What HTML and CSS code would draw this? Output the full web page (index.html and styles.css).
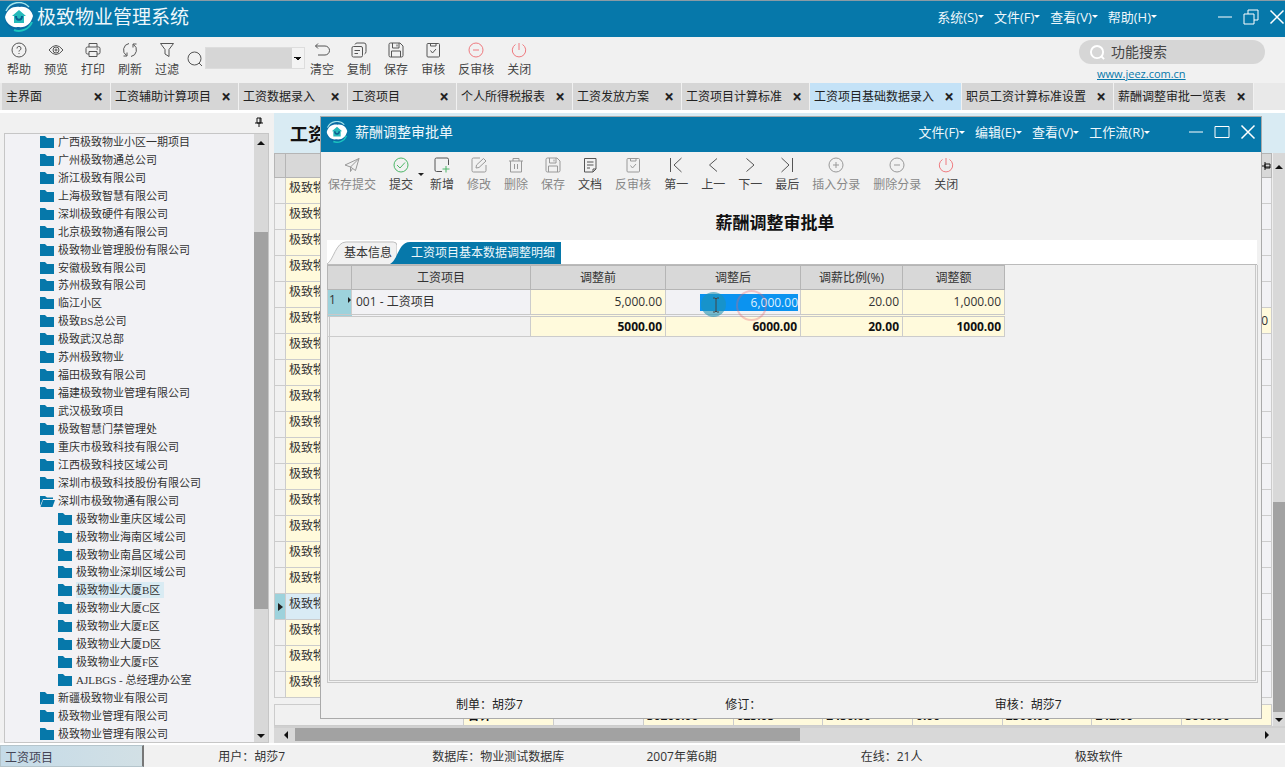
FILE: index.html
```html
<!DOCTYPE html>
<html lang="zh-CN">
<head>
<meta charset="utf-8">
<title>极致物业管理系统</title>
<link rel="stylesheet" href="styles.css">
</head>
<body>
<svg class="defs" width="0" height="0" aria-hidden="true">
  <symbol id="logo" viewBox="0 0 30 30"><circle cx="15" cy="15" r="14" fill="#0a6ba2"/><path d="M2 9A14 14 0 0 1 25 5" fill="none" stroke="#a5e3ea" stroke-width="1.500"/><path d="M28 20A14 14 0 0 1 10 28" fill="none" stroke="#1cc5c0" stroke-width="2"/><path d="M1 15C3 7 9 4 16 5C23 4 28 9 29 14C27 22 22 26 14 25C7 26 2 21 1 15Z" fill="#fff"/><path d="M15 8L22 14H20V21H10V14H8Z" fill="#25b9ba"/><path d="M12 14C12 19 18 19 18 14" fill="none" stroke="#0b5f90" stroke-width="2"/></symbol>
  <symbol id="help" viewBox="0 0 16 16"><circle cx="8" cy="8" r="7"/><path d="M6 6.500A2 2 0 1 1 8.600 8.300Q8 8.600 8 9.600M8 11V12"/></symbol>
  <symbol id="eye" viewBox="0 0 16 16"><path d="M1 8Q8 -1 15 8Q8 17 1 8Z"/><circle cx="8" cy="8" r="3"/><circle cx="8" cy="8" r="1"/></symbol>
  <symbol id="print" viewBox="0 0 16 16"><path d="M4 5V1.500H12V5M4 12H2.500Q1 12 1 10.500V6.500Q1 5 2.500 5H13.500Q15 5 15 6.500V10.500Q15 12 13.500 12H12M4 9.500H12V14.500H4ZM11.500 7H13"/></symbol>
  <symbol id="refresh" viewBox="0 0 16 16"><path d="M7 1.500A6.600 6.600 0 0 0 4.500 13.500M1.500 14H5V10.500M9 14.500A6.600 6.600 0 0 0 11.500 2.500M14.500 2H11V5.500"/></symbol>
  <symbol id="filter" viewBox="0 0 16 16"><path d="M1.500 1.500H14.500L10 7.500V14.500L6 12V7.500Z"/></symbol>
  <symbol id="search" viewBox="0 0 16 16"><circle cx="7.500" cy="7.500" r="6.500"/><path d="M12 12L15 15"/></symbol>
  <symbol id="undo" viewBox="0 0 16 16"><path d="M4 1.500L1.500 4L4 6.500M1.500 4H11A4.500 4.500 0 0 1 11 13H4"/></symbol>
  <symbol id="copy" viewBox="0 0 16 16"><rect x="1" y="4.500" width="10.500" height="10.500" rx="1.500"/><path d="M4 2.500Q4.500 1 6 1H13Q15 1 15 3V9.500Q15 11.500 13.500 12M3.500 8.500H9M3.500 11.500H7"/></symbol>
  <symbol id="save" viewBox="0 0 16 16"><path d="M2.500 1H12L15 4V13.500Q15 15 13.500 15H2.500Q1 15 1 13.500V2.500Q1 1 2.500 1ZM4.500 1V6H11V1M9 2.500V4.500M3.500 15V9H12.500V15"/></symbol>
  <symbol id="audit" viewBox="0 0 16 16"><rect x="2" y="1.500" width="12.500" height="13.500" rx="1"/><path d="M5.500 1.500V4H11V1.500M5.500 8.500L7.500 11L11 7"/></symbol>
  <symbol id="minus" viewBox="0 0 16 16"><circle cx="8" cy="8" r="7"/><path d="M5 8H11"/></symbol>
  <symbol id="plus" viewBox="0 0 16 16"><circle cx="8" cy="8" r="7"/><path d="M5 8H11M8 5V11"/></symbol>
  <symbol id="power" viewBox="0 0 16 16"><path d="M8 1V8M4.500 2.500A6.700 6.700 0 1 0 11.500 2.500"/></symbol>
  <symbol id="plane" viewBox="0 0 16 16"><path d="M1 8L15 1.500L11.500 13.500L6.500 10ZM6.500 10L15 1.500M6.500 10V14.500L8.500 11.500"/></symbol>
  <symbol id="check" viewBox="0 0 16 16"><circle cx="8" cy="8" r="7"/><path d="M4 8L7 11L12 5.500"/></symbol>
  <symbol id="new" viewBox="0 0 16 16"><path d="M8 14.500H2.500Q1 14.500 1 13V2.500Q1 1 2.500 1H13Q14.500 1 14.500 2.500V8"/><path d="M12 9V15.500M8.500 12H15.500" stroke="#4db768"/></symbol>
  <symbol id="edit" viewBox="0 0 16 16"><path d="M9 1H2.500Q1 1 1 2.500V13.500Q1 15 2.500 15H13.500Q15 15 15 13.500V8M5 11L5.500 8L12.500 1.500L15 4L8 10.500Z"/></symbol>
  <symbol id="trash" viewBox="0 0 16 16"><path d="M1 4H15M5 4V1.500H11V4M2.500 4V15H13.500V4M6.500 7V12M9.500 7V12"/></symbol>
  <symbol id="doc" viewBox="0 0 16 16"><path d="M11 15H2.500V1.500H14V12L11 15V12H14M5 5H11.500M5 8H11.500M5 11H8"/></symbol>
  <symbol id="first" viewBox="0 0 16 16"><path d="M2.500 1V15M13.500 1L6 8L13.500 15"/></symbol>
  <symbol id="prev" viewBox="0 0 16 16"><path d="M12 1.500L4.500 8L12 14.500"/></symbol>
  <symbol id="next" viewBox="0 0 16 16"><path d="M4.500 1.500L12 8L4.500 14.500"/></symbol>
  <symbol id="last" viewBox="0 0 16 16"><path d="M13.500 1V15M2.500 1L10 8L2.500 15"/></symbol>
  <symbol id="pin" viewBox="0 0 10 10"><path d="M3 1H7V6H3ZM1 6H9M5 6V10M6 1V6" stroke="#111"/></symbol>
  <symbol id="min" viewBox="0 0 16 16"><path d="M1 8H15"/></symbol>
  <symbol id="restore" viewBox="0 0 16 16"><path d="M1 5H11V15H1ZM5 5V1H15V11H11"/></symbol>
  <symbol id="max" viewBox="0 0 16 16"><path d="M1 2.500H15V13.500H1Z"/></symbol>
  <symbol id="close" viewBox="0 0 16 16"><path d="M1.500 1.500L14.500 14.500M14.500 1.500L1.500 14.500" stroke-width="1.500"/></symbol>
  <symbol id="folder" viewBox="0 0 16 14"><path d="M1 1H6L8 3H15V13H1Z" fill="#0678aa"/></symbol>
  <symbol id="folder-open" viewBox="0 0 16 14"><path d="M1 12V2H6L8 3.500H14V5H4Z" fill="#0678aa"/><path d="M4 6H16L13.500 13H1.500Z" fill="#0678aa"/></symbol>
</svg>

<header class="titlebar">
  <svg class="logo"><use href="#logo"/></svg>
  <h1 class="app-name">极致物业管理系统</h1>
  <nav class="menus">
    <button class="menu">系统(S)<i class="caret"></i></button><button class="menu">文件(F)<i class="caret"></i></button><button class="menu">查看(V)<i class="caret"></i></button><button class="menu">帮助(H)<i class="caret"></i></button>
  </nav>
  <div class="winbtns main-win">
    <button aria-label="最小化"><svg><use href="#min"/></svg></button><button aria-label="还原"><svg><use href="#restore"/></svg></button><button aria-label="关闭"><svg><use href="#close"/></svg></button>
  </div>
</header>

<div class="toolbar">
  <button class="tool"><svg><use href="#help"/></svg>帮助</button>
  <button class="tool"><svg><use href="#eye"/></svg>预览</button>
  <button class="tool"><svg><use href="#print"/></svg>打印</button>
  <button class="tool"><svg><use href="#refresh"/></svg>刷新</button>
  <button class="tool"><svg><use href="#filter"/></svg>过滤</button>
  <div class="finder"><svg><use href="#search"/></svg><select class="combo" aria-label="查询"><option></option></select></div>
  <button class="tool"><svg><use href="#undo"/></svg>清空</button>
  <button class="tool"><svg><use href="#copy"/></svg>复制</button>
  <button class="tool"><svg><use href="#save"/></svg>保存</button>
  <button class="tool"><svg><use href="#audit"/></svg>审核</button>
  <button class="tool"><svg class="red"><use href="#minus"/></svg>反审核</button>
  <button class="tool"><svg class="red"><use href="#power"/></svg>关闭</button>
  <div class="brand">
    <label class="search"><svg><use href="#search"/></svg><input type="text" placeholder="功能搜索" aria-label="功能搜索"></label>
    <a class="site" href="#">www.jeez.com.cn</a>
  </div>
</div>

<nav class="tabs">
  <button class="tab">主界面<b>×</b></button>
  <button class="tab">工资辅助计算项目<b>×</b></button>
  <button class="tab">工资数据录入<b>×</b></button>
  <button class="tab">工资项目<b>×</b></button>
  <button class="tab">个人所得税报表<b>×</b></button>
  <button class="tab">工资发放方案<b>×</b></button>
  <button class="tab">工资项目计算标准<b>×</b></button>
  <button class="tab current">工资项目基础数据录入<b>×</b></button>
  <button class="tab">职员工资计算标准设置<b>×</b></button>
  <button class="tab">薪酬调整审批一览表<b>×</b></button>
</nav>

<main class="workspace">
  <aside class="sidebar">
    <div class="pinbar"><svg><use href="#pin"/></svg></div>
    <div class="treebox">
      <ul class="tree">
        <li><svg><use href="#folder"/></svg><span>广西极致物业小区一期项目</span></li>
        <li><svg><use href="#folder"/></svg><span>广州极致物通总公司</span></li>
        <li><svg><use href="#folder"/></svg><span>浙江极致有限公司</span></li>
        <li><svg><use href="#folder"/></svg><span>上海极致智慧有限公司</span></li>
        <li><svg><use href="#folder"/></svg><span>深圳极致硬件有限公司</span></li>
        <li><svg><use href="#folder"/></svg><span>北京极致物通有限公司</span></li>
        <li><svg><use href="#folder"/></svg><span>极致物业管理股份有限公司</span></li>
        <li><svg><use href="#folder"/></svg><span>安徽极致有限公司</span></li>
        <li><svg><use href="#folder"/></svg><span>苏州极致有限公司</span></li>
        <li><svg><use href="#folder"/></svg><span>临江小区</span></li>
        <li><svg><use href="#folder"/></svg><span>极致BS总公司</span></li>
        <li><svg><use href="#folder"/></svg><span>极致武汉总部</span></li>
        <li><svg><use href="#folder"/></svg><span>苏州极致物业</span></li>
        <li><svg><use href="#folder"/></svg><span>福田极致有限公司</span></li>
        <li><svg><use href="#folder"/></svg><span>福建极致物业管理有限公司</span></li>
        <li><svg><use href="#folder"/></svg><span>武汉极致项目</span></li>
        <li><svg><use href="#folder"/></svg><span>极致智慧门禁管理处</span></li>
        <li><svg><use href="#folder"/></svg><span>重庆市极致科技有限公司</span></li>
        <li><svg><use href="#folder"/></svg><span>江西极致科技区域公司</span></li>
        <li><svg><use href="#folder"/></svg><span>深圳市极致科技股份有限公司</span></li>
        <li><svg><use href="#folder-open"/></svg><span>深圳市极致物通有限公司</span></li>
        <li class="sub"><svg><use href="#folder"/></svg><span>极致物业重庆区域公司</span></li>
        <li class="sub"><svg><use href="#folder"/></svg><span>极致物业海南区域公司</span></li>
        <li class="sub"><svg><use href="#folder"/></svg><span>极致物业南昌区域公司</span></li>
        <li class="sub"><svg><use href="#folder"/></svg><span>极致物业深圳区域公司</span></li>
        <li class="sub picked"><svg><use href="#folder"/></svg><span>极致物业大厦B区</span></li>
        <li class="sub"><svg><use href="#folder"/></svg><span>极致物业大厦C区</span></li>
        <li class="sub"><svg><use href="#folder"/></svg><span>极致物业大厦E区</span></li>
        <li class="sub"><svg><use href="#folder"/></svg><span>极致物业大厦D区</span></li>
        <li class="sub"><svg><use href="#folder"/></svg><span>极致物业大厦F区</span></li>
        <li class="sub"><svg><use href="#folder"/></svg><span>AJLBGS - 总经理办公室</span></li>
        <li><svg><use href="#folder"/></svg><span>新疆极致物业有限公司</span></li>
        <li><svg><use href="#folder"/></svg><span>极致物业管理有限公司</span></li>
        <li><svg><use href="#folder"/></svg><span>极致物业管理有限公司</span></li>
      </ul>
      <div class="vscroll side-scroll"><i class="up"></i><div class="lead"></div><div class="thumb"></div><div class="trail"></div><i class="down"></i></div>
    </div>
  </aside>

  <section class="sheet">
    <h2 class="sheet-title">工资</h2>
    <div class="sheet-body">
      <div class="gridwrap">
        <table class="grid">
          <colgroup><col class="c-mark"><col class="c-name"><col><col class="c-end"></colgroup>
          <thead><tr><th></th><th></th><th></th><th class="pin-cell"><svg><use href="#pin"/></svg></th></tr></thead>
          <tbody>
            <tr><th></th><td class="name">极致物</td><td></td><td></td></tr>
            <tr><th></th><td class="name">极致物</td><td></td><td></td></tr>
            <tr><th></th><td class="name">极致物</td><td></td><td></td></tr>
            <tr><th></th><td class="name">极致物</td><td></td><td></td></tr>
            <tr><th></th><td class="name">极致物</td><td></td><td></td></tr>
            <tr><th></th><td class="name">极致物</td><td></td><td class="amount">0</td></tr>
            <tr><th></th><td class="name">极致物</td><td></td><td></td></tr>
            <tr><th></th><td class="name">极致物</td><td></td><td></td></tr>
            <tr><th></th><td class="name">极致物</td><td></td><td></td></tr>
            <tr><th></th><td class="name">极致物</td><td></td><td></td></tr>
            <tr><th></th><td class="name">极致物</td><td></td><td></td></tr>
            <tr><th></th><td class="name">极致物</td><td></td><td></td></tr>
            <tr><th></th><td class="name">极致物</td><td></td><td></td></tr>
            <tr><th></th><td class="name">极致物</td><td></td><td></td></tr>
            <tr><th></th><td class="name">极致物</td><td></td><td></td></tr>
            <tr><th></th><td class="name">极致物</td><td></td><td></td></tr>
            <tr class="active"><th><i class="marker"></i></th><td class="name">极致物</td><td></td><td></td></tr>
            <tr><th></th><td class="name">极致物</td><td></td><td></td></tr>
            <tr><th></th><td class="name">极致物</td><td></td><td></td></tr>
            <tr><th></th><td class="name">极致物</td><td></td><td></td></tr>
          </tbody>
        </table>
        <table class="totals">
          <tr><td class="lead-cell"></td><td class="y">合计</td><td></td><td class="y">30200.00</td><td class="y">625.05</td><td class="y">2450.00</td><td class="y">0.00</td><td class="y">2500.00</td><td class="y">242.00</td><td class="y">5000.00</td></tr>
        </table>
      </div>
      <div class="vscroll main-scroll"><i class="up"></i><div class="lead"></div><div class="thumb"></div><div class="trail"></div><i class="down"></i></div>
    </div>
    <div class="hscroll"><i class="left"></i><div class="hthumb"></div><div class="htrail"></div><i class="right"></i></div>
  </section>
</main>

<footer class="status">
  <div class="status-first"><button class="task">工资项目</button></div>
  <span>用户：胡莎7</span><span>数据库：物业测试数据库</span><span>2007年第6期</span><span>在线：21人</span><span>极致软件</span>
</footer>

<section class="dialog" role="dialog" aria-label="薪酬调整审批单">
  <header class="dlg-title">
    <svg class="logo"><use href="#logo"/></svg>
    <span class="dlg-name">薪酬调整审批单</span>
    <nav class="menus">
      <button class="menu">文件(F)<i class="caret"></i></button><button class="menu">编辑(E)<i class="caret"></i></button><button class="menu">查看(V)<i class="caret"></i></button><button class="menu">工作流(R)<i class="caret"></i></button>
    </nav>
    <div class="winbtns dlg-win">
      <button aria-label="最小化"><svg><use href="#min"/></svg></button><button aria-label="最大化"><svg><use href="#max"/></svg></button><button aria-label="关闭"><svg><use href="#close"/></svg></button>
    </div>
  </header>
  <div class="dlg-tools">
    <button class="tool off"><svg><use href="#plane"/></svg>保存提交</button>
    <button class="tool"><svg class="green"><use href="#check"/></svg>提交</button>
    <i class="drop"></i>
    <button class="tool"><svg><use href="#new"/></svg>新增</button>
    <button class="tool off"><svg><use href="#edit"/></svg>修改</button>
    <button class="tool off"><svg><use href="#trash"/></svg>删除</button>
    <button class="tool off"><svg><use href="#save"/></svg>保存</button>
    <button class="tool"><svg><use href="#doc"/></svg>文档</button>
    <button class="tool off"><svg><use href="#audit"/></svg>反审核</button>
    <button class="tool"><svg><use href="#first"/></svg>第一</button>
    <button class="tool"><svg><use href="#prev"/></svg>上一</button>
    <button class="tool"><svg><use href="#next"/></svg>下一</button>
    <button class="tool"><svg><use href="#last"/></svg>最后</button>
    <button class="tool off"><svg><use href="#plus"/></svg>插入分录</button>
    <button class="tool off"><svg><use href="#minus"/></svg>删除分录</button>
    <button class="tool"><svg class="red"><use href="#power"/></svg>关闭</button>
  </div>
  <h2 class="dlg-heading">薪酬调整审批单</h2>
  <div class="dlg-tabs">
    <button class="dtab"><svg viewBox="0 0 73 24" preserveAspectRatio="none"><path d="M0 24C7 20 9 1 20 1H69Q73 1 73 5V24" fill="#f1f1f1" stroke="#bbb"/></svg><span>基本信息</span></button>
    <button class="dtab on"><svg viewBox="0 0 170 24" preserveAspectRatio="none"><path d="M0 24C8 20 8 1 20 1H170V24Z" fill="#0678aa"/></svg><span>工资项目基本数据调整明细</span></button>
  </div>
  <div class="panel">
    <table class="detail">
      <colgroup><col class="d0"><col class="d1"><col class="d2"><col class="d2"><col class="d3"><col class="d3"></colgroup>
      <thead><tr><th></th><th>工资项目</th><th>调整前</th><th>调整后</th><th>调薪比例(%)</th><th>调整额</th></tr></thead>
      <tbody>
        <tr><th class="rownum"><div>1<i class="marker"></i></div></th><td class="item">001 - 工资项目</td><td class="y">5,000.00</td><td class="editing"><input type="text" value="6,000.00" aria-label="调整后"></td><td class="y">20.00</td><td class="y">1,000.00</td></tr>
      </tbody>
      <tfoot><tr><td colspan="2"></td><td class="y">5000.00</td><td class="y">6000.00</td><td class="y">20.00</td><td class="y">1000.00</td></tr></tfoot>
    </table>
    <i class="halo"></i><i class="ring"></i>
    <svg class="ibeam" viewBox="0 0 8 16"><path d="M1 1H3L4 2L5 1H7M4 2V14M1 15H3L4 14L5 15H7"/></svg>
  </div>
  <div class="signs"><span>制单：胡莎7</span><span>修订：</span><span>审核：胡莎7</span></div>
</section>
</body>
</html>
```

FILE: styles.css
```css
* { box-sizing: border-box; }
html, body { height: 100%; margin: 0; }
body {
  display: flex; flex-direction: column; position: relative; overflow: hidden;
  background: #f1f1f1; color: #333; border-top: 1px solid #8a9ba5;
  font: 12px/16px "Open Sans", "Noto Sans CJK SC", sans-serif;
}
button, input, select { font: inherit; color: inherit; border: 0; background: none; padding: 0; margin: 0; white-space: nowrap; }
svg { fill: none; stroke: #555; stroke-width: 1; display: block; }
.defs { position: absolute; }
h1, h2 { margin: 0; }
.logo, .tree svg { stroke: none; }

/* title bars */
.titlebar { display: flex; align-items: center; height: 36px; flex: none; background: #0678aa; color: #fff; padding: 0 0 5px 4px; }
.titlebar .logo { width: 30px; height: 30px; }
.app-name { font-size: 19px; line-height: 28px; font-weight: 400; margin-left: 3px; flex: 1; color: #eef7fb; }
.menus { display: flex; gap: 10px; color: #eef7fb; }
.menu { display: flex; align-items: center; font-size: 13px; }
.caret { border: 3px solid transparent; border-top-color: #fff; border-bottom: 0; }
.winbtns { display: flex; }
.winbtns svg { width: 16px; height: 16px; stroke: #fff; }
.main-win { gap: 10px; margin-left: 60px; }

/* toolbars */
.toolbar { display: flex; flex: none; height: 46px; padding: 5px 20px 0 7px; gap: 13px; }
.tool { display: flex; flex-direction: column; align-items: center; gap: 4px; color: #444; line-height: 16px; height: 36px; }
.tool svg { width: 16px; height: 16px; }
.tool svg.red { stroke: #ef7b80; }
.tool svg.green { stroke: #4db768; }
.off { color: #888; }
.off svg { stroke: #999; }
.finder { display: flex; gap: 2px; margin: 0 -8px 0 -5px; align-items: flex-start; padding-top: 5px; }
.finder svg { width: 16px; height: 16px; margin-top: 4px; }
.combo { width: 100px; height: 22px; appearance: none; border: 1px solid #ddd; border-radius: 0;
  background: linear-gradient(#d6d6d6, #d6d6d6) 0 0 / 86px 100% no-repeat,
    conic-gradient(from 315deg at 50% 100%, #111 90deg, #f3f3f3 0) 88px 9px / 8px 4px no-repeat, #f3f3f3; }
.brand { margin-left: auto; width: 186px; margin-top: -2px; }
.search { display: flex; align-items: center; gap: 6px; height: 24px; border-radius: 12px; background: #d6d6d6; padding-left: 11px; }
.search svg { width: 15px; height: 15px; stroke: #fff; stroke-width: 2; flex: none; }
.search input { width: 100%; font-size: 14px; line-height: 20px; outline: 0; }
.search input::placeholder { color: #444; opacity: 1; }
.site { display: block; margin-left: 18px; font-size: 11px; line-height: 19px; color: #0678aa; }

/* page tabs */
.tabs { display: flex; flex: none; height: 30px; padding-left: 2px; background: #e9e9e9; border-bottom: 3px solid #fff; }
.tab { display: flex; align-items: center; justify-content: space-between; gap: 10px; min-width: 109px; height: 27px; padding: 0 7px 0 4px; background: #d6d6d6; border-right: 1px solid #f1f1f1; color: #222; }
.tab b { font-size: 17px; line-height: 16px; width: 10px; text-align: center; }
.tab.current { background: #c4e2f7; }

/* workspace */
.workspace { display: flex; flex: 1; min-height: 0; gap: 5px; padding-left: 4px; }
.sidebar { width: 265px; flex: none; display: flex; flex-direction: column; }
.pinbar { display: flex; justify-content: flex-end; padding: 4px 5px 6px 0; }
.pinbar svg { width: 10px; height: 10px; }
.treebox { display: flex; flex: 1; min-height: 0; border: 1px solid #c6c6c6; background: #f2f2f5; }
.tree { list-style: none; margin: -1px 0; padding: 0 0 0 34px; flex: 1; display: flex; flex-direction: column; font: 11px/16px "Liberation Serif", "Noto Sans CJK SC", serif; }
.tree li { flex: 1; min-height: 0; display: flex; align-items: center; gap: 3px; white-space: nowrap; }
.tree li.sub { padding-left: 18px; }
.tree svg { width: 16px; height: 14px; flex: none; }
.picked span { background: #d9ebf3; padding-right: 4px; }
.vscroll { display: flex; flex-direction: column; align-items: center; background: #d8d8d8; }
.side-scroll { width: 14px; padding: 7px 0 4px; }
.thumb { width: 100%; background: #a2a2a2; }
.side-scroll .lead { flex: 86; }
.side-scroll .thumb { flex: 374; }
.side-scroll .trail { flex: 124; }
.up { border: 4px solid transparent; border-top: 0; border-bottom-color: #111; }
.down { border: 4px solid transparent; border-bottom: 0; border-top-color: #111; }
.left { border: 4px solid transparent; border-left: 0; border-right-color: #111; }
.right { border: 4px solid transparent; border-right: 0; border-left-color: #111; }

.sheet { flex: 1; min-width: 0; display: flex; flex-direction: column; }
.sheet-title { flex: none; height: 40px; background: #d9ebf3; padding: 9px 16px; font-size: 18px; line-height: 24px; color: #111; }
.sheet-body { flex: 1; min-height: 0; display: flex; }
.gridwrap { flex: 1; min-width: 0; display: flex; flex-direction: column; justify-content: space-between; }
table { border-collapse: collapse; table-layout: fixed; }
td, th { border: 1px solid #ccc; padding: 0; font-weight: 400; }
.grid { width: 100%; }
.grid thead tr { height: 24px; }
.grid tbody tr { height: 26px; }
.grid tbody td { background: #f2f2f5; }
.grid tbody .name { background: #fffadc; padding: 0 3px 6px; white-space: nowrap; }
.grid tbody .amount { background: #fffadc; text-align: right; padding-right: 3px; }
.grid thead th { background: #d8d8d8; border-color: #b5b5b5; }
.grid .active .name { background: #d9ebf5; }
.grid .active th { background: #9dd2dc; }
.pin-cell svg { width: 10px; height: 10px; margin-left: auto; transform: rotate(90deg); }
.c-mark { width: 11px; }
.c-name { width: 179px; }
.c-end { width: 90px; }
.marker { display: block; width: 0; border: 4px solid transparent; border-left: 5px solid #222; border-right: 0; margin-left: 3px; }
.totals { width: 100%; }
.totals td { height: 21px; font-weight: 700; color: #111; padding: 2px 3px 0; line-height: 14px; }
.totals .lead-cell { width: 19%; }
.y { background: #fffadc; }
.main-scroll { width: 13px; padding: 12px 0 4px; border-left: 1px solid #eee; }
.main-scroll .lead { flex: 331; }
.main-scroll .thumb { flex: 208; }
.main-scroll .trail { flex: 6; }
.hscroll { flex: none; height: 17px; display: flex; align-items: center; background: #d8d8d8; padding: 0 16px 0 10px; border-top: 2px solid #d0d0d0; border-bottom: 2px solid #d8d8d8; }
.hthumb { flex: 505; height: 13px; background: #a2a2a2; margin-left: 7px; }
.htrail { flex: 465; }

/* status bar */
.status { flex: none; height: 24px; display: grid; grid-template-columns: repeat(6, 1fr); border-top: 2px solid #fff; line-height: 24px; }
.status span { padding-left: 4px; }
.task { width: 144px; height: 22px; text-align: left; padding-left: 4px; background: linear-gradient(90deg, #c5dbe8, #d2e0e5); border: 1px solid #b5c5cc; border-right: 2px solid #777; color: #445; }

/* dialog window */
.dialog { position: absolute; left: 320px; right: 23px; top: 115px; bottom: 48px; display: flex; flex-direction: column; background: #f1f1f1; border: 1px solid #aaa; }
.dlg-title { flex: none; height: 35px; display: flex; align-items: center; background: #0678aa; padding: 0 5px 5px 5px; }
.dlg-title .logo { width: 22px; height: 22px; }
.dlg-name { flex: 1; font-size: 14px; line-height: 20px; color: #eef7fb; margin-left: 7px; }
.dlg-win { gap: 10px; margin-left: 38px; }
.dlg-tools { flex: none; display: flex; gap: 13px; padding: 5px 0 0 7px; height: 56px; }
.drop { border: 3px solid transparent; border-top-color: #222; border-bottom: 0; height: 3px; margin: 16px -7px 0 -8px; }
.dlg-heading { flex: none; height: 32px; padding-right: 32px; text-align: center; font-size: 17px; line-height: 30px; color: #111; }
.dlg-tabs { display: flex; flex: none; height: 25px; margin: 0 4px 0 6px; background: #fff; padding-top: 1px; border-bottom: 1px solid #bbb; }
.dtab { display: grid; align-items: center; height: 23px; }
.dtab svg, .dtab span { grid-area: 1 / 1; }
.dtab svg { width: 100%; height: 23px; stroke: none; }
.dtab span { padding: 0 5px 0 17px; }
.dtab.on { color: #eef7fb; margin-left: -7px; }
.dtab.on span { padding: 0 6px 0 21px; }
.panel { flex: 1; min-height: 0; position: relative; margin: 0 3px 0 6px; border: 3px double #c8c8c8; border-top: 0; }
.detail { width: 678px; margin-left: -3px; color: #333; }
.d0 { width: 24px; }
.d1 { width: 179px; }
.d2 { width: 135px; }
.d3 { width: 102px; }
.detail thead th { height: 24px; background: #d8d8d8; border-color: #b5b5b5; }
.detail tbody tr { height: 26px; }
.detail td { text-align: right; padding-right: 3px; }
.detail .item { text-align: left; padding-left: 4px; background: #f2f2f5; }
.rownum { background: #9dd2dc; vertical-align: top; }
.rownum div { display: flex; justify-content: space-between; align-items: center; padding: 1px 0 0 1px; line-height: 18px; }
.rownum .marker { border-width: 3px; border-right: 0; }
.detail .editing { background: #f2f2f5; padding-right: 2px; }
.editing input { width: 98px; height: 17px; display: block; margin-left: auto; background: #0b93f0; color: #dff1ff; text-align: right; }
.detail tfoot { border-top: 3px double #c8c8c8; }
.detail tfoot td { height: 21px; font-weight: 700; color: #111; }
.halo { position: absolute; left: 371px; top: 27px; width: 25px; height: 25px; border-radius: 50%; background: #1f93b399; }
.ring { position: absolute; left: 406px; top: 25px; width: 31px; height: 31px; border-radius: 50%; border: 2px solid #e8627055; }
.ibeam { position: absolute; left: 382px; top: 32px; width: 8px; height: 16px; stroke: #444; }
.signs { flex: none; height: 35px; display: grid; grid-template-columns: 269fr 269fr 266fr; padding: 14px 0 0 135px; color: #222; }
```
